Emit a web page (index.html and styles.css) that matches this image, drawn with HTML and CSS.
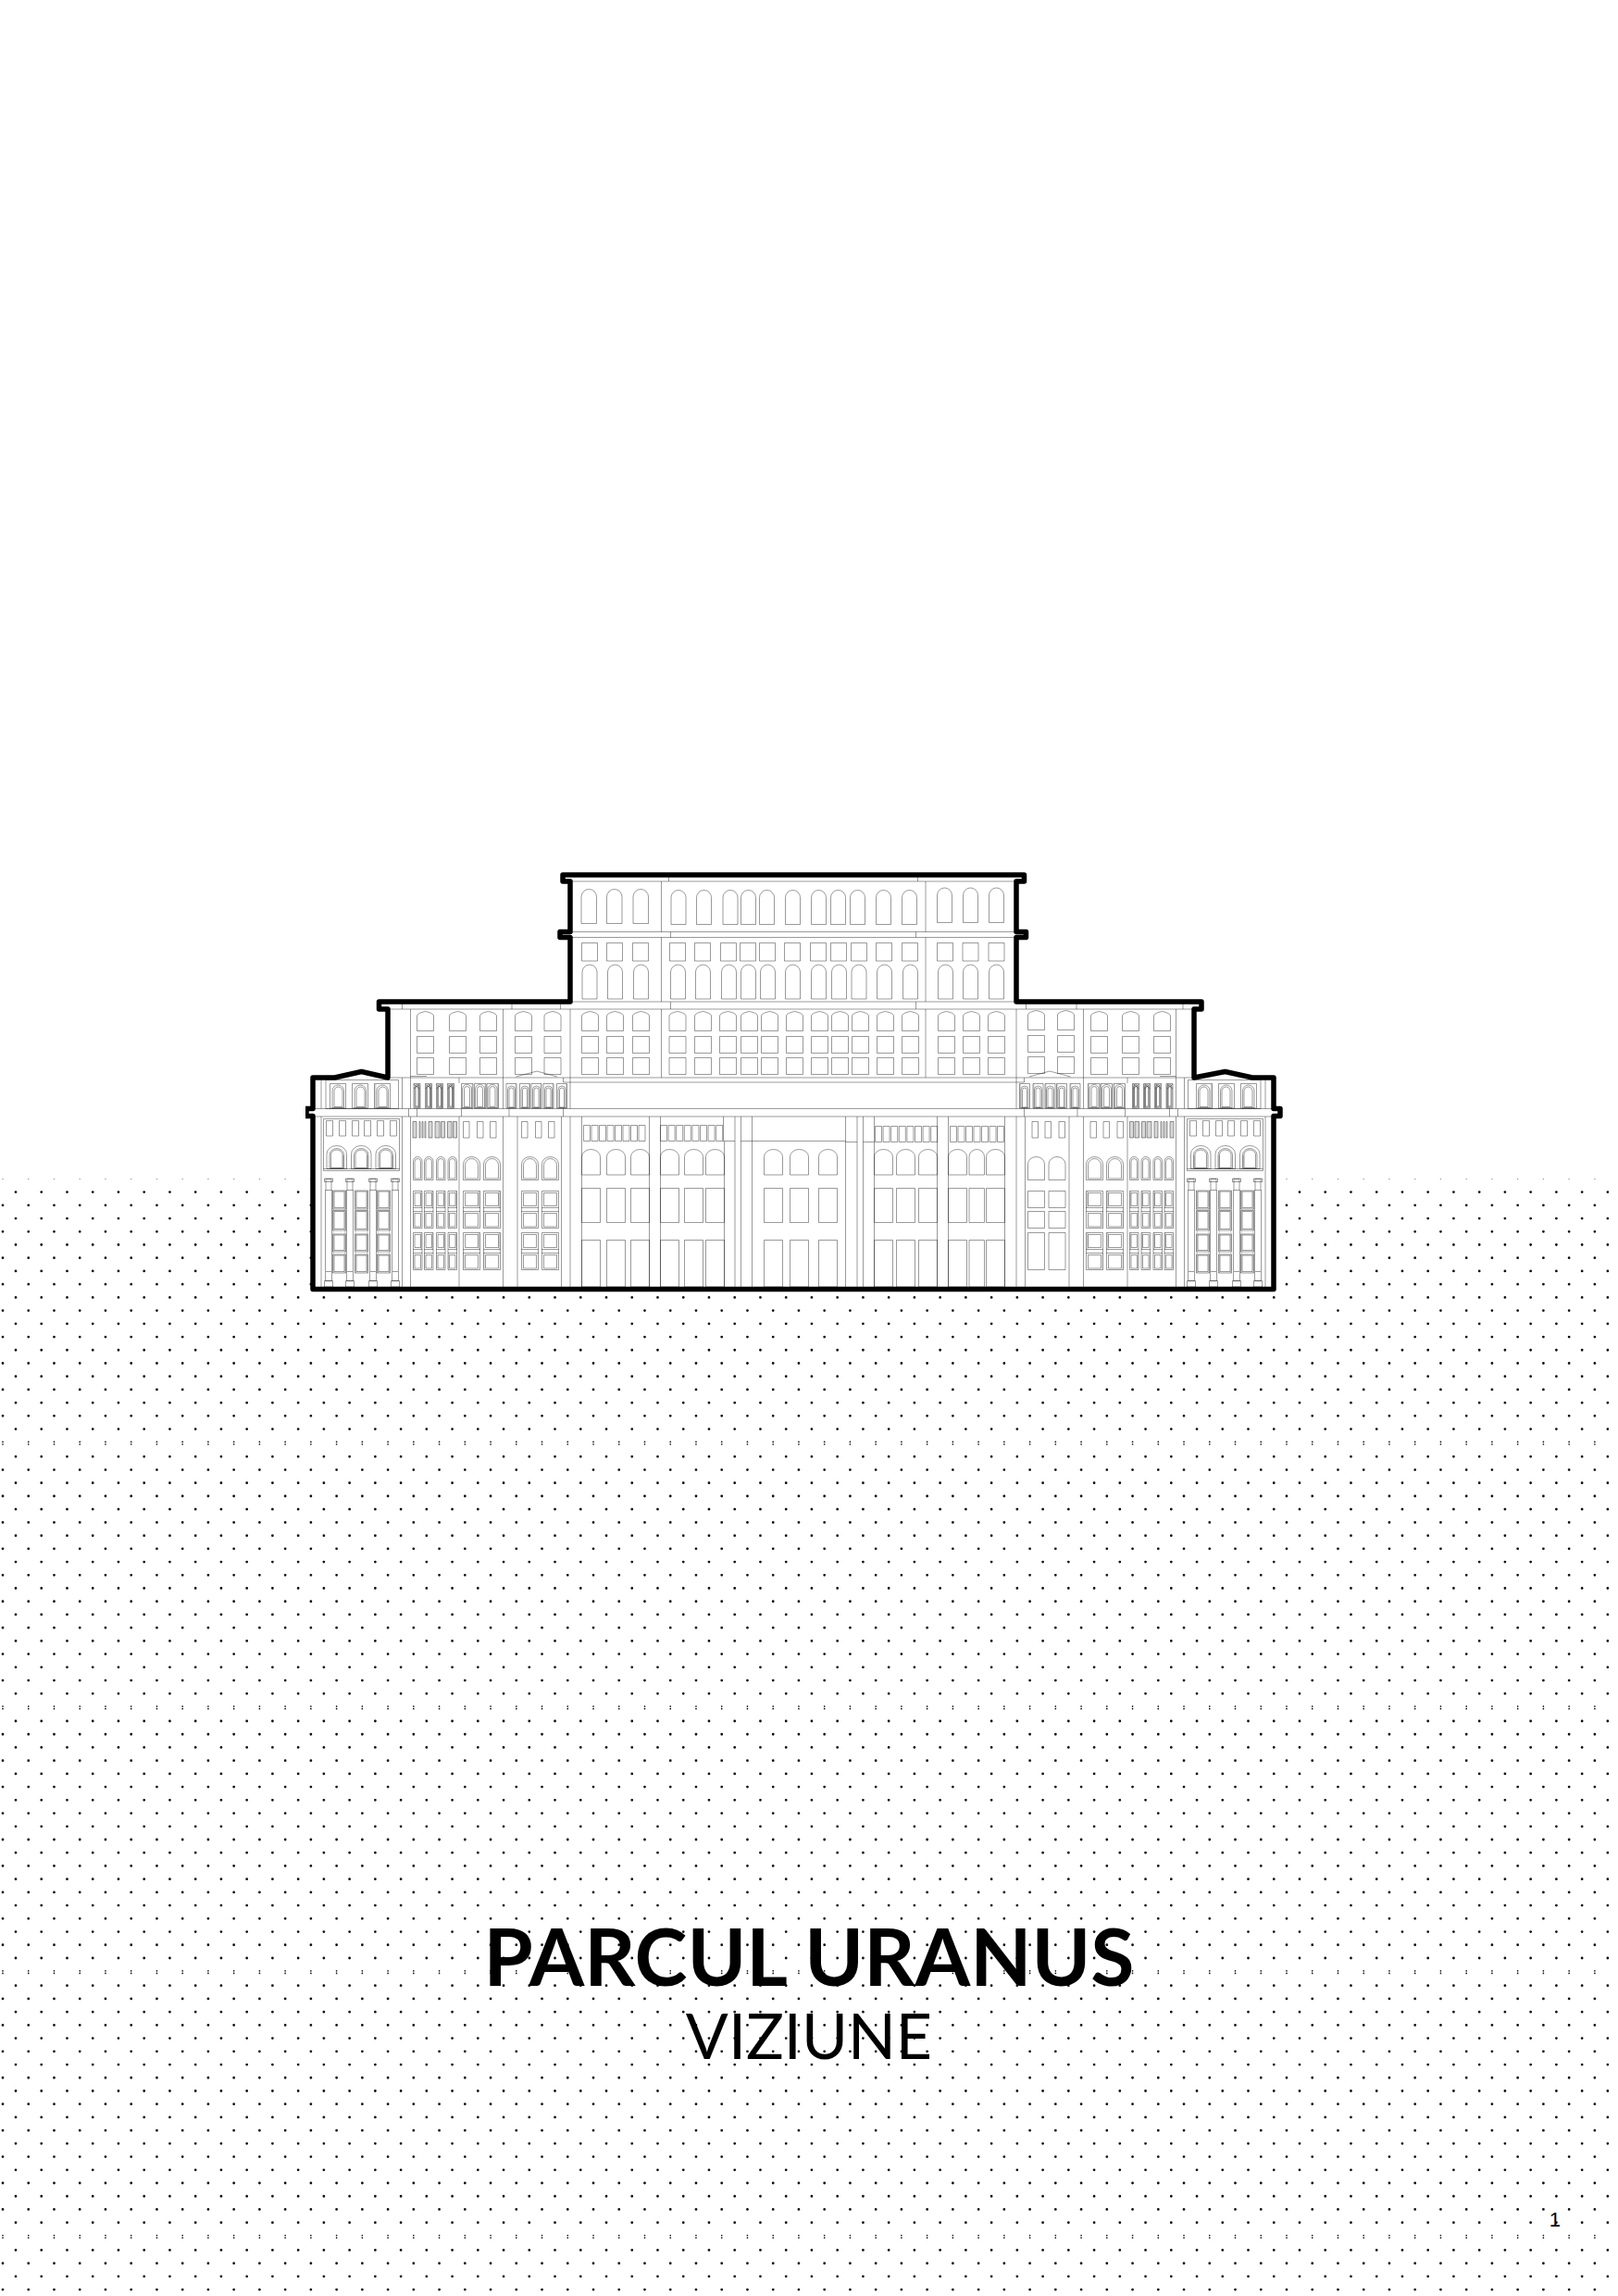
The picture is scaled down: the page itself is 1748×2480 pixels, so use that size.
FILE: index.html
```html
<!DOCTYPE html>
<html lang="ro">
<head>
<meta charset="utf-8">
<meta name="viewport" content="width=device-width, initial-scale=1">
<title>Parcul Uranus – Viziune</title>
<link rel="stylesheet" href="styles.css">
</head>
<body>
<main class="cover">
  <svg class="dots" aria-hidden="true"></svg>
  <figure class="figure">
    <svg class="palace" viewBox="330 940 1088 456" role="img" aria-label="Palatul Parlamentului">
      <path class="mass" d="M338 1392.500V1205.500H331V1197.500H338V1164H361.500L390.500 1157.500L419 1164V1090H409.500V1082H616V1012.500H605V1006.500H616V952H608V945H1106.500V952H1098V1006.500H1108.500V1012.500H1098V1082H1298V1090H1290V1164L1323.500 1157.500L1353 1164H1376V1197.500H1383V1205.500H1376V1392.500Z"/>
      <g class="detail">
        <path id="facade"/>
        <g id="wing"><path class="shade" id="wing-shade"/><path id="wing-lines"/></g>
        <use href="#wing" transform="translate(1714 0) scale(-1 1)"/>
        <path id="inner-bays"/>
      </g>
      <path class="outline" d="M338 1392.500V1205.500H331V1197.500H338V1164H361.500L390.500 1157.500L419 1164V1090H409.500V1082H616V1012.500H605V1006.500H616V952H608V945H1106.500V952H1098V1006.500H1108.500V1012.500H1098V1082H1298V1090H1290V1164L1323.500 1157.500L1353 1164H1376V1197.500H1383V1205.500H1376V1392.500Z"/>
    </svg>
  </figure>
  <header class="titles">
    <h1 class="title">PARCUL URANUS</h1>
    <p class="subtitle">VIZIUNE</p>
  </header>
  <footer class="folio">1</footer>
</main>
<script src="drawing.js"></script>
</body>
</html>
```
FILE: styles.css
```css
* {
  box-sizing: border-box;
}

body {
  margin: 0;
  background: #fff;
  color: #000;
  font-family: Lato, "Open Sans", sans-serif;
}

.cover {
  position: relative;
  display: flex;
  flex-direction: column;
  min-height: 100vh;
  padding-top: 940px;
  overflow: hidden;
}

.dots {
  position: absolute;
  top: 1273px;
  left: 0;
  width: 100%;
  height: calc(100% - 1273px);
}

.dots line {
  stroke: #111;
  stroke-width: 2.8;
  stroke-linecap: round;
  stroke-dasharray: 0 27.74;
}

.dots .seam {
  stroke: #111;
  stroke-width: 1.7;
}

.dots .edge {
  stroke: #999;
  stroke-width: 1.5;
}

.figure {
  position: relative;
  align-self: center;
  width: 100%;
  max-width: 1088px;
  margin: 0;
}

.palace {
  display: block;
  width: 100%;
}

.mass {
  fill: #fff;
}

.detail {
  fill: none;
  stroke: #000;
  stroke-width: 0.4;
}

.shade {
  fill: #d8d8d8;
  stroke: none;
}

.outline {
  fill: none;
  stroke: #000;
  stroke-width: 5.5;
  stroke-linejoin: round;
}

.titles {
  position: relative;
  margin-top: 667px;
  text-align: center;
}

.title {
  margin: 0;
  font-size: 86px;
  font-weight: 700;
  line-height: 98px;
}

.subtitle {
  margin: 0;
  font-size: 68px;
  font-weight: 400;
  line-height: 74px;
}

.folio {
  position: relative;
  margin-top: auto;
  padding: 0 62px 68px;
  font-family: "Liberation Sans", sans-serif;
  font-size: 22px;
  line-height: 28px;
  text-align: right;
}
```
FILE: drawing.js
```js
// Path helpers: every one returns a piece of path data.
const h = (y, x1, x2) => `M${x1} ${y}H${x2}`;
const v = (x, y1, y2) => `M${x} ${y1}V${y2}`;
const rect = (x, y, x2, y2) => `M${x} ${y}H${x2}V${y2}H${x}Z`;
const arch = (x, y, x2, y2, rise) => {
  const rx = (x2 - x) / 2;
  const ry = rise || rx;
  return `M${x} ${y2}V${y + ry}A${rx} ${ry} 0 0 1 ${x2} ${y + ry}V${y2}Z`;
};
const crown = (x, y, w, y2) =>
  `M${x} ${y2}V${y + 4.5}Q${x + 1} ${y + 1.5} ${x + w / 2} ${y}Q${x + w - 1} ${y + 1.5} ${x + w} ${y + 4.5}V${y2}Z`;
const set = (id, parts) => document.getElementById(id).setAttribute('d', parts.join(''));

// Dotted ground: rows of round dots, alternately shifted by half a step.
// Each band opens with a seam row, where a dot is split into two small ones.
const dots = document.querySelector('.dots');
const row = (y, x, name) => {
  const line = document.createElementNS('http://www.w3.org/2000/svg', 'line');
  line.setAttribute('x1', x);
  line.setAttribute('x2', '100%');
  line.setAttribute('y1', y);
  line.setAttribute('y2', y);
  if (name) line.setAttribute('class', name);
  dots.append(line);
};
for (let band = 0; band < 8; band++) {
  const top = band * 285.7;
  if (band === 0) {
    row(0.5, 3, 'edge');
  } else {
    row(top - 1.3, 3, 'seam');
    row(top + 1.3, 3, 'seam');
  }
  for (let i = 1; i < 20; i++) row(top + i * 14.22 + 0.4, i % 2 ? 17 : 3);
}

// Central block and upper tiers.
const f = [];
f.push(h(952, 616, 1098), h(1006.5, 605, 1108), h(1012.5, 605, 1108));
f.push(h(1082, 616, 1098), h(1090, 419, 1290), h(1164, 419, 1290));
f.push(h(1169, 608.5, 1106.5), h(1197.5, 338, 1376), h(1206, 338, 1376));
[722.5, 991.5].forEach(x => f.push(v(x, 947, 952)));
[724.5, 989.5].forEach(x => f.push(v(x, 1006.5, 1012.5)));
[434.5, 553, 605.5, 724.5, 989.5, 1108.5, 1163, 1278].forEach(x => f.push(v(x, 1082, 1090)));
[714.5, 1000].forEach(x => f.push(v(x, 952, 1006.5), v(x, 1012.5, 1082), v(x, 1090, 1164)));
[443.5, 543.5, 616, 1098, 1170.5, 1270.5].forEach(x => f.push(v(x, 1090, 1164)));
[608.5, 1106.5].forEach(x => f.push(v(x, 1164, 1169), v(x, 1197.5, 1206)));
[616, 1098].forEach(x => f.push(v(x, 1164, 1197.5)));
[616, 628.5, 701.5, 713.5, 794, 800.5, 812.5, 913.5, 926, 932.5, 944.5, 1012.5, 1024.5, 1085.5, 1098]
  .forEach(x => f.push(v(x, 1206, 1390)));
f.push(v(781.5, 1206, 1232.5), v(782.5, 1232.5, 1390));
f.push(h(1232.5, 781.5, 794), h(1232.5, 800.5, 913.5), h(1233.5, 913.5, 926), h(1233.5, 932.5, 944.5));

[628, 655.5, 684].forEach(x => f.push(arch(x, 960.5, x + 16.5, 997.5)));
[725, 752.5, 781, 800.5, 820.5, 848.5, 876.5, 897.5, 918.5, 946.5, 974.5]
  .forEach(x => f.push(arch(x, 961.5, x + 16, 998.5)));
[1012.5, 1040.5, 1068.5].forEach(x => f.push(arch(x, 959, x + 16, 996.5)));
[628.5, 655.5, 683.5, 723.5, 750.5, 778.5, 799.5, 820.5, 847.5, 875.5, 897.5, 919.5, 946.5, 974.5, 1012.5, 1040, 1068]
  .forEach(x => f.push(rect(x, 1018.5, x + 17, 1038)));
[629, 656.5, 684.5, 724.5, 751.5, 779.5, 800.5, 821.5, 848.5, 876.5, 898.5, 920, 947.5, 975.5, 1013.5, 1040.5, 1068.5]
  .forEach(x => f.push(arch(x, 1042, x + 16, 1079)));
const stack = (x, y) => f.push(
  crown(x, y, 18, y + 21), rect(x, y + 27, x + 18, y + 45), rect(x, y + 50, x + 18, y + 68));
[628.5, 655.5, 683.5, 723, 750.5, 777.5, 800.5, 822.5, 849.5, 876.5, 898.5, 920.5, 947.5, 974.5, 1013.5, 1040.5, 1067.5]
  .forEach(x => stack(x, 1092.5));
[450.5, 485.5, 518.5, 556.5, 588, 1178.5, 1212.5, 1246.5].forEach(x => stack(x, 1092.5));
[1110.5, 1142.5].forEach(x => stack(x, 1091.5));

// Slatted openings and tall windows behind the main colonnade.
const slats = (x, y, pitch, n) => {
  for (let i = 0; i < n; i++) f.push(rect(x + i * pitch, y, x + i * pitch + 7, y + 17));
};
slats(630.5, 1215.5, 8.5, 8);
slats(713.5, 1215.5, 8.6, 8);
slats(945.5, 1216.5, 8.6, 8);
slats(1026.5, 1216.5, 8.5, 7);
[628.5, 655.5, 681.5, 713.5, 739.5, 762.5, 825.5, 853.5, 884.5, 944.5, 968.5, 992.5, 1024.5, 1047, 1065.5]
  .forEach(x => {
    const x2 = x + (x === 1047 ? 16.5 : 20);
    f.push(arch(x, 1241.5, x2, 1269, 8), rect(x, 1283.5, x2, 1320.5), rect(x, 1339.5, x2, 1390));
  });
set('facade', f);

// Left wing; the right one is its mirror image.
const w = [];
const s = [];
w.push('M443.500 1162.500H461M557.500 1163L580 1157L602 1163');
[434.5, 443.5, 543.5].forEach(x => w.push(v(x, 1164, 1197.5)));
w.push(v(496, 1164, 1170), v(347, 1164, 1197.5));
[441.5, 450.5, 498.5, 550].forEach(x => w.push(v(x, 1197.5, 1206)));
[347, 434.5, 443.5, 496, 543.5, 559, 606.5].forEach(x => w.push(v(x, 1206, 1390)));

// Loggia with the pediment
w.push(rect(352, 1166.5, 430.5, 1197.5));
[356.5, 380.5, 404.5].forEach(x => {
  w.push(rect(x, 1170.5, x + 17, 1197), arch(x + 2.5, 1172, x + 15, 1196.5), arch(x + 4.5, 1174, x + 13.5, 1195.5));
});
s.push(rect(404.5, 1171, 406.5, 1197));
[447, 459.5, 471.5, 483.5].forEach(x => {
  w.push(rect(x, 1170.5, x + 7, 1197), arch(x + 1, 1171.5, x + 6, 1196), arch(x + 2, 1173, x + 5, 1195));
  w.push(`M${x} 1171L${x + 6} 1176M${x + 6} 1171L${x} 1176`);
  s.push(rect(x + 4.5, 1171, x + 7, 1197));
});
[498.5, 512.5, 526].forEach(x => {
  w.push(rect(x, 1170.5, x + 12.5, 1197), arch(x + 1, 1171.5, x + 11, 1196.5), arch(x + 3, 1173.5, x + 9, 1195.5));
  s.push(rect(x + 11, 1171, x + 12.5, 1197));
});
[547, 561.5, 574, 587, 601.5].forEach(x => {
  w.push(rect(x, 1170.5, x + 11, 1197));
  w.push(arch(x + 1.5, 1173, x + 9.5, 1196.5), arch(x + 3, 1175, x + 8, 1196));
  s.push(rect(x + 9.5, 1171, x + 11, 1197));
});

// Framed attic of the corner pavilion
w.push(rect(349.5, 1208.5, 431.5, 1264.5), h(1262.5, 349.5, 431.5));
[352.5, 366.5, 380.5, 393.5, 407.5, 421.5].forEach(x => w.push(rect(x, 1210.5, x + 7, 1227)));
[353, 379.5, 406].forEach(x => {
  w.push(arch(x, 1237.5, x + 21.5, 1262.5, 9), arch(x + 3, 1240.5, x + 18.5, 1262, 7), arch(x + 4.5, 1242, x + 17, 1261.5, 5));
  s.push(rect(x + 17, 1248, x + 18.5, 1262));
});

// Columns and the windows between them
[350.5, 373.5, 398.5, 422.5].forEach(x => {
  w.push(rect(x, 1273, x + 9, 1276.5), rect(x + 1.5, 1273.5, x + 7.5, 1285.5));
  w.push(v(x + 1, 1285, 1373), v(x + 8, 1285, 1373));
  w.push(rect(x + 1, 1373.5, x + 8, 1383.5), rect(x, 1383.5, x + 9, 1390));
});
[359.5, 383.5, 407.5].forEach(x => {
  [[1286, 1306], [1307.5, 1329], [1333, 1352], [1355, 1375]].forEach(([a, b]) => {
    w.push(rect(x, a, x + 14, b), rect(x + 1.5, a + 1, x + 12.5, b - 1.5));
  });
  s.push(rect(x + 12.5, 1286, x + 14, 1375), rect(x, 1286, x + 1.3, 1375));
});

// Vertical slats over the narrow windows
[[446, 450], [453, 454], [456, 457], [459, 460], [463, 467], [470, 475], [476.5, 480.5], [483.5, 488], [489.5, 493.5]]
  .forEach(([a, b]) => {
    w.push(rect(a, 1211.5, b, 1229));
    if (b - a > 2) s.push(rect(a, 1211.5, b, 1229));
  });
[500.5, 515.5, 529.5, 563.5, 578.5, 592.5].forEach(x => w.push(rect(x, 1211.5, x + 6.5, 1229)));

const bay = (x, x2, inset) => {
  w.push(arch(x, 1249.5, x2, 1274.5, Math.min((x2 - x) / 2, 8)));
  w.push(arch(x + inset, 1251.5, x2 - inset, 1273, Math.min((x2 - x) / 2 - inset, 7)));
  [1286.5, 1331.5].forEach(y => {
    w.push(rect(x, y, x2, y + 40), h(y + 18, x, x2), h(y + 22, x, x2));
    w.push(rect(x + inset, y + 2, x2 - inset, y + 16), rect(x + inset, y + 24, x2 - inset, y + 38.5));
    s.push(rect(x2 - inset, y, x2, y + 18), rect(x, y + 22, x + inset / 2, y + 40));
  });
};
[446.5, 458.5, 471.5, 484].forEach(x => bay(x, x + 9.5, 1.5));
[500.5, 522.5].forEach(x => bay(x, x + 18, 2));
set('wing-lines', w);
set('wing-shade', s);

// The innermost bays differ: double frames on the left, plain ones on the right.
const b = [];
[563.5, 585.5].forEach(x => {
  const x2 = x + 18;
  b.push(arch(x, 1249.5, x2, 1274.5, 8), arch(x + 2, 1251.5, x2 - 2, 1273, 7));
  [1286.5, 1331.5].forEach(y => {
    b.push(rect(x, y, x2, y + 40), h(y + 18, x, x2), h(y + 22, x, x2));
    b.push(rect(x + 2, y + 2, x2 - 2, y + 16), rect(x + 2, y + 24, x2 - 2, y + 38.5));
  });
});
[1110.5, 1133].forEach(x => {
  const x2 = x + 18;
  b.push(arch(x, 1249.5, x2, 1274.5, 8), rect(x, 1286.5, x2, 1304.5), rect(x, 1308.5, x2, 1326.5), rect(x, 1331.5, x2, 1371.5));
});
set('inner-bays', b);
```
